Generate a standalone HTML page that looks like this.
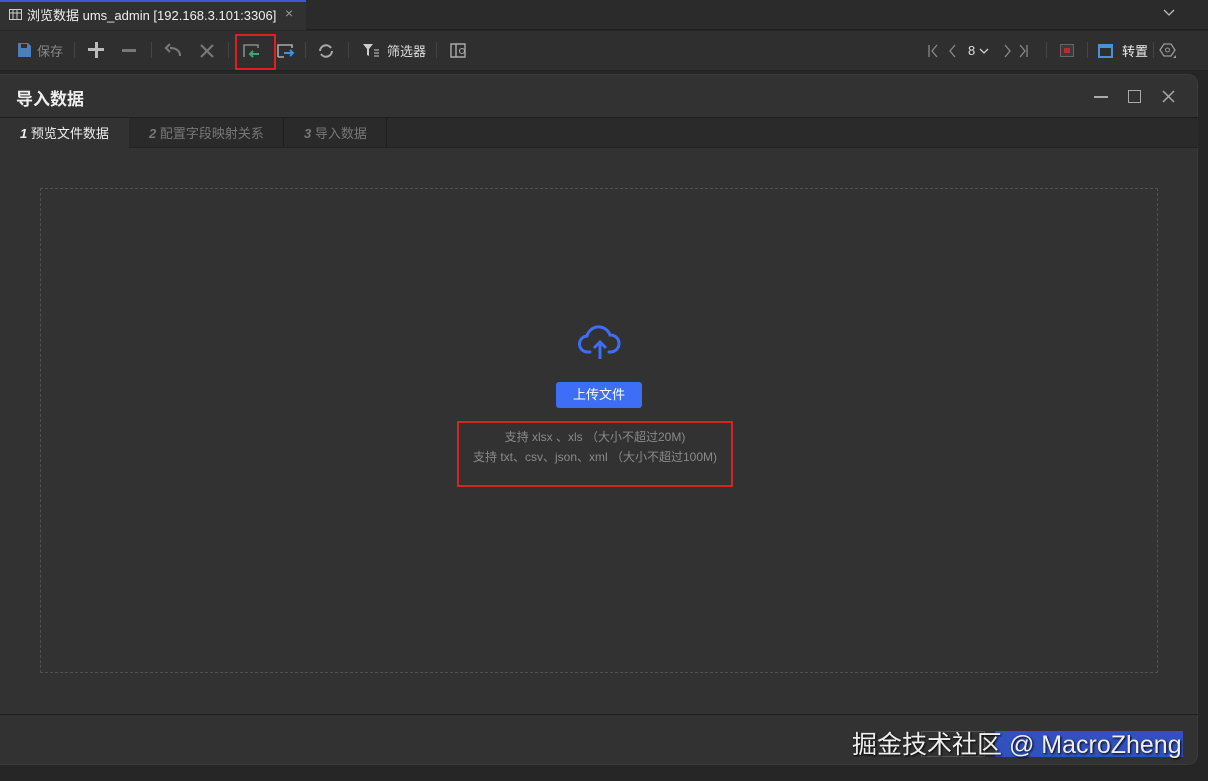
<!DOCTYPE html>
<html><head><meta charset="utf-8"><style>
*{margin:0;padding:0;box-sizing:border-box}
body{width:1208px;height:781px;background:#262626;font-family:"Liberation Sans","Noto Sans CJK SC",sans-serif;position:relative;overflow:hidden;color:#ddd;font-size:13px}
.abs{position:absolute}
</style></head><body>
<div class="abs" style="left:0;top:0;width:1208px;height:30px;background:#2b2b2b;border-bottom:1px solid #1e1e1e"></div>
<div class="abs" style="left:0;top:0;width:306px;height:30px;background:#313131;border-top:2px solid #3b5bd6"></div>
<svg class="abs" style="left:9px;top:9px" width="13" height="11"><rect x=".5" y=".5" width="12" height="10" fill="none" stroke="#ccc"/><path d="M0 4h13M4 1v10M8 1v10" stroke="#ccc"/></svg>
<div class="abs" style="left:27px;top:5px;color:#eee;font-size:13px">浏览数据 ums_admin [192.168.3.101:3306]</div>
<div class="abs" style="left:285px;top:5px;color:#999;font-size:14px">×</div>
<svg class="abs" style="left:1163px;top:9px" width="12" height="8"><path d="M1 1l5 5 5-5" stroke="#bbb" fill="none" stroke-width="1.3"/></svg>
<div class="abs" style="left:0;top:31px;width:1208px;height:40px;background:#2f2f2f;border-bottom:1px solid #222"></div>
<svg class="abs" style="left:17px;top:42px" width="15" height="16"><path d="M1 1h10l3 3v11H1z" fill="#4a7fb8"/><rect x="4" y="2" width="6" height="4" fill="#2f2f2f"/></svg>
<div class="abs" style="left:37px;top:41px;color:#888">保存</div>
<div class="abs" style="left:74px;top:42px;width:1px;height:16px;background:#444"></div>
<div class="abs" style="left:88px;top:43px;width:16px;height:3px;background:#bbb;margin-top:5px"></div>
<div class="abs" style="left:94.5px;top:42px;width:3px;height:16px;background:#bbb"></div>
<div class="abs" style="left:122px;top:49px;width:14px;height:3px;background:#777"></div>
<div class="abs" style="left:151px;top:42px;width:1px;height:16px;background:#444"></div>
<svg class="abs" style="left:164px;top:43px" width="18" height="14"><path d="M16 13c0-6-5-8-10-8M6 1L2 5l4 4" stroke="#777" fill="none" stroke-width="2.2"/></svg>
<svg class="abs" style="left:200px;top:44px" width="14" height="14"><path d="M1 1l12 12M13 1L1 13" stroke="#777" stroke-width="2.2"/></svg>
<div class="abs" style="left:228px;top:42px;width:1px;height:16px;background:#444"></div>
<div class="abs" style="left:235px;top:34px;width:41px;height:36px;border:2px solid #e02020"></div>
<svg class="abs" style="left:243px;top:43px" width="18" height="16"><path d="M1 14V2h14v3" stroke="#888" fill="none" stroke-width="1.6"/><path d="M16 11H7M10 8l-3 3 3 3" stroke="#3aa870" fill="none" stroke-width="2"/></svg>
<svg class="abs" style="left:277px;top:43px" width="18" height="16"><path d="M1 14V2h14v3M1 14h6" stroke="#aaa" fill="none" stroke-width="1.6"/><path d="M7 10h9M13 7l3 3-3 3" stroke="#3a8fe0" fill="none" stroke-width="2"/></svg>
<div class="abs" style="left:305px;top:42px;width:1px;height:16px;background:#444"></div>
<svg class="abs" style="left:318px;top:43px" width="16" height="16"><path d="M14 8a6 6 0 0 1-11 3M2 8a6 6 0 0 1 11-3" stroke="#aaa" fill="none" stroke-width="2"/></svg>
<div class="abs" style="left:348px;top:42px;width:1px;height:16px;background:#444"></div>
<svg class="abs" style="left:362px;top:43px" width="18" height="14"><path d="M1 1h10L7 6v7l-2-1V6z" fill="#ccc"/><path d="M12 7h5M12 10h5M12 13h5" stroke="#ccc"/></svg>
<div class="abs" style="left:387px;top:41px;color:#ddd">筛选器</div>
<div class="abs" style="left:436px;top:42px;width:1px;height:16px;background:#444"></div>
<svg class="abs" style="left:450px;top:43px" width="18" height="15"><path d="M1 1h14v13H1zM6 1v13" stroke="#aaa" fill="none" stroke-width="1.4"/><circle cx="12" cy="8" r="2.5" stroke="#aaa" fill="none"/></svg>
<svg class="abs" style="left:928px;top:44px" width="100" height="14"><path d="M1 1v12M9 1L4 7l5 6M27 1l-5 6 5 6M77 1l5 6-5 6M92 1l5 6-5 6M99 1v12" stroke="#888" fill="none" stroke-width="1.3"/></svg>
<div class="abs" style="left:968px;top:43px;color:#ddd">8</div>
<svg class="abs" style="left:979px;top:48px" width="10" height="7"><path d="M1 1l4 4 4-4" stroke="#ccc" fill="none" stroke-width="1.3"/></svg>
<div class="abs" style="left:1046px;top:42px;width:1px;height:16px;background:#444"></div>
<div class="abs" style="left:1060px;top:44px;width:14px;height:13px;border:1px solid #666;background:#3a3a3a"><div style="margin:3px;width:6px;height:5px;background:#b03030"></div></div>
<div class="abs" style="left:1087px;top:42px;width:1px;height:16px;background:#444"></div>
<div class="abs" style="left:1098px;top:44px;width:15px;height:14px;border:2px solid #4a90d9;border-top-width:4px"></div>
<div class="abs" style="left:1122px;top:41px;color:#eee">转置</div>
<div class="abs" style="left:1153px;top:42px;width:1px;height:16px;background:#444"></div>
<svg class="abs" style="left:1159px;top:42px" width="18" height="18"><path d="M5 2h7l4 6-4 6H5L1 8z" stroke="#999" fill="none" stroke-width="1.3"/><circle cx="8.5" cy="8" r="2" stroke="#999" fill="none"/><path d="M14 16l3-3v3z" fill="#999"/></svg>
<div class="abs" style="left:0;top:74px;width:1198px;height:691px;background:#323232;border-radius:0 10px 10px 0;border:1px solid #3a3a3a;border-left:none"></div>
<div class="abs" style="left:16px;top:85px;color:#eee;font-size:17px;font-weight:bold">导入数据</div>
<div class="abs" style="left:1094px;top:96px;width:14px;height:1.5px;background:#aaa"></div>
<div class="abs" style="left:1128px;top:90px;width:13px;height:13px;border:1.5px solid #aaa"></div>
<svg class="abs" style="left:1162px;top:90px" width="13" height="13"><path d="M1 1l11 11M12 1L1 12" stroke="#aaa" stroke-width="1.5"/></svg>
<div class="abs" style="left:0;top:117px;width:1198px;height:31px;background:#2a2a2a;border-top:1px solid #1e1e1e;border-bottom:1px solid #222"></div>
<div class="abs" style="left:0;top:118px;width:129px;height:30px;background:#323232"></div>
<div class="abs" style="left:20px;top:123px;color:#eee"><i><b>1</b></i> 预览文件数据</div>
<div class="abs" style="left:129px;top:118px;width:155px;height:29px;border-right:1px solid #1e1e1e"></div>
<div class="abs" style="left:149px;top:123px;color:#777"><i><b>2</b></i> 配置字段映射关系</div>
<div class="abs" style="left:284px;top:118px;width:103px;height:29px;border-right:1px solid #1e1e1e"></div>
<div class="abs" style="left:304px;top:123px;color:#777"><i><b>3</b></i> 导入数据</div>
<div class="abs" style="left:40px;top:188px;width:1118px;height:485px;border:1px dashed #505050"></div>
<svg class="abs" style="left:578px;top:324px" width="44" height="36"><path d="M12 28H10a8 8 0 0 1-1-16 12 12 0 0 1 23-1 8 8 0 0 1 1 17h-2" stroke="#3d6ef5" fill="none" stroke-width="3" stroke-linecap="round"/><path d="M22 35V19M16 24l6-6 6 6" stroke="#3d6ef5" fill="none" stroke-width="3"/></svg>
<div class="abs" style="left:556px;top:382px;width:86px;height:26px;background:#3d6ef5;border-radius:3px;color:#fff;text-align:center;line-height:26px;font-size:13px">上传文件</div>
<div class="abs" style="left:457px;top:421px;width:276px;height:66px;border:2px solid #d42424"></div>
<div class="abs" style="left:457px;top:427px;width:276px;text-align:center;color:#8a8a8a;font-size:12px;line-height:20px">支持 xlsx 、xls （大小不超过20M)<br>支持 txt、csv、json、xml （大小不超过100M)</div>
<div class="abs" style="left:0;top:714px;width:1198px;height:1px;background:#1e1e1e"></div>
<div class="abs" style="left:921px;top:731px;width:64px;height:26px;border:1px solid #555"></div>
<div class="abs" style="left:995px;top:731px;width:188px;height:26px;background:#3151c0"></div>
<div class="abs" style="left:852px;top:725px;color:#eee;font-size:25px;text-shadow:1px 1px 2px #000">掘金技术社区 @ MacroZheng</div>
</body></html>
